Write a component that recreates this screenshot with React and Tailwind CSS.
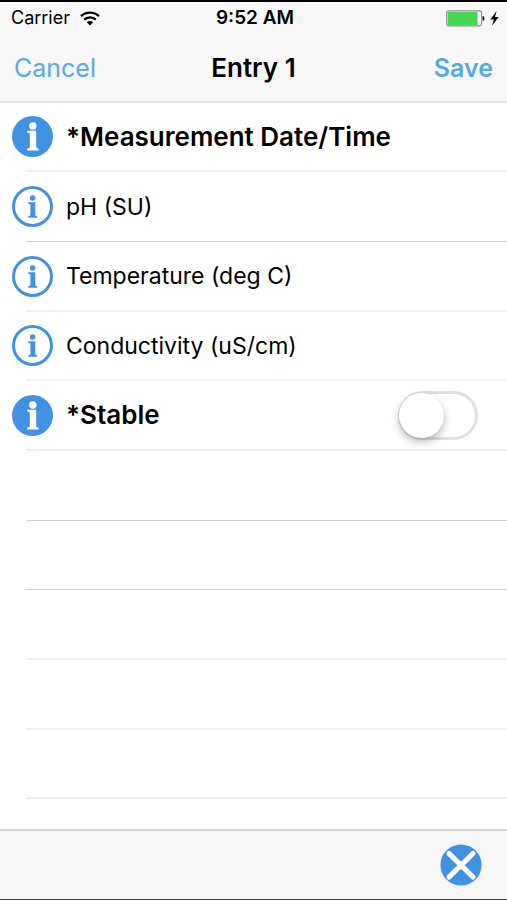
import { useState } from 'react';

// Rows of the entry form, required fields are marked with a star
const fields = [
  { name: '*Measurement Date/Time', required: true },
  { name: 'pH (SU)', strongLine: true },
  { name: 'Temperature (deg C)' },
  { name: 'Conductivity (uS/cm)' },
  { name: '*Stable', required: true, toggle: true },
];

const emptyRows = [
  { strongLine: true },
  { strongLine: true },
  {},
  {},
  {},
];

export default function App() {
  const [stable, setStable] = useState(false);

  return (
    <div className="flex min-h-screen flex-col border-t-2 border-b border-t-black border-b-[#444444] bg-white font-['Inter',sans-serif] text-black">
      <header className="border-b-2 border-[#e4e4e4] bg-[#f7f7f7]">
        <StatusBar />
        <nav className="grid h-[67px] grid-cols-3 items-center px-[14px]">
          <button type="button" className="justify-self-start text-[25px] leading-8 text-[#57a9e6]">Cancel</button>
          <h1 className="justify-self-center text-[26px] leading-8 font-semibold whitespace-nowrap">Entry 1</h1>
          <button type="button" className="justify-self-end text-[25px] leading-8 font-semibold text-[#57a9e6]">Save</button>
        </nav>
      </header>

      <main className="flex-1">
        <ul>
          {fields.map((field) => (
            <Row key={field.name} strongLine={field.strongLine}>
              <button type="button" aria-label={`About ${field.name}`} className="-ml-[14px] shrink-0">
                <InfoIcon filled={field.required} />
              </button>
              {field.toggle ? (
                <>
                  <label htmlFor="stable" className="ml-[13px] flex-1 text-[26px] leading-8 font-semibold">{field.name}</label>
                  <Toggle id="stable" checked={stable} onChange={setStable} />
                </>
              ) : (
                <span className={field.required ? 'ml-[13px] text-[26px] leading-8 font-semibold' : 'ml-[13px] text-[23px] leading-8'}>
                  {field.name}
                </span>
              )}
            </Row>
          ))}
          {emptyRows.map((row, idx) => (
            <Row key={idx} strongLine={row.strongLine} />
          ))}
        </ul>
      </main>

      <footer className="flex h-[70px] items-center justify-end border-t-2 border-[#d6d6d6] bg-[#f7f7f7] px-[25px]">
        <button type="button" aria-label="Close">
          <CloseIcon />
        </button>
      </footer>
    </div>
  );
}

function Row({ strongLine, children }) {
  return (
    <li className="h-[70px] pl-[26px] nth-[3n+1]:h-[69px]">
      <div className={`flex h-full items-center pr-[29px] ${strongLine ? 'border-b border-[#cfcfcf]' : 'border-b-2 border-[#f0f0f0]'}`}>
        {children}
      </div>
    </li>
  );
}

function StatusBar() {
  return (
    <div className="grid h-[32px] grid-cols-3 items-center pr-[8px] pl-[11px] text-[18px] leading-6">
      <div className="flex items-center gap-[10px]">
        <span>Carrier</span>
        <WifiIcon />
      </div>
      <span className="justify-self-center text-[19px] font-semibold whitespace-nowrap">9:52 AM</span>
      <div className="flex items-center gap-[5px] justify-self-end">
        <BatteryIcon />
        <BoltIcon />
      </div>
    </div>
  );
}

function Toggle({ id, checked, onChange }) {
  return (
    <span className="relative h-[49px] w-[80px] shrink-0">
      <input
        id={id}
        type="checkbox"
        role="switch"
        checked={checked}
        onChange={(e) => onChange(e.target.checked)}
        className="peer block h-full w-full appearance-none rounded-full border-[3px] border-[#e0e0e0] bg-white checked:border-[#4cd964] checked:bg-[#4cd964]"
      />
      <span className="pointer-events-none absolute top-[2px] left-[1px] size-[45px] rounded-full bg-white shadow-[0_4px_8px_rgba(0,0,0,0.28)] peer-checked:translate-x-[33px]" />
    </span>
  );
}

// Icons
function InfoIcon({ filled }) {
  if (filled) {
    return (
      <svg width="41" height="41" viewBox="0 0 41 41" fill="none">
        <circle cx="20.5" cy="20.5" r="20.5" fill="#4292e4" />
        <circle cx="20.8" cy="10" r="3.7" fill="white" />
        <path d="M15.2 14.8H24.2V31.8L26.6 32.8V34.6H15.2V32.8L17.8 31.8V17.4L15.2 16.6Z" fill="white" />
      </svg>
    );
  }
  return (
    <svg width="41" height="41" viewBox="0 0 41 41" fill="none">
      <circle cx="20.5" cy="20.5" r="19" stroke="#4292e4" strokeWidth="3" />
      <circle cx="20.6" cy="12" r="2.8" fill="#4292e4" />
      <path d="M16.2 16.2H23.3V29.4L25.2 30.2V31.7H16.2V30.2L18.4 29.4V18.4L16.2 17.7Z" fill="#4292e4" />
    </svg>
  );
}

function CloseIcon() {
  return (
    <svg width="42" height="42" viewBox="0 0 42 42" fill="none">
      <circle cx="21" cy="21" r="20.6" fill="#4292e4" />
      <path d="M9 9.5L33 33M33 9.5L9 33" stroke="white" strokeWidth="5.2" strokeLinecap="round" />
    </svg>
  );
}

function WifiIcon() {
  return (
    <svg width="20" height="15" viewBox="0 0 20 15" fill="none">
      <path d="M1 5.1C6 0.4 14 0.4 19 5.1" stroke="black" strokeWidth="2.2" />
      <path d="M4.2 8.6C7.5 5.5 12.5 5.5 15.8 8.6" stroke="black" strokeWidth="2.2" />
      <path d="M6.8 11.3C8.6 9.7 11.4 9.7 13.2 11.3L10 14.6Z" fill="black" />
    </svg>
  );
}

function BatteryIcon() {
  return (
    <svg width="39" height="17" viewBox="0 0 39 17" fill="none">
      <rect x="0.6" y="0.9" width="35" height="15" rx="2.5" stroke="#8e8e8e" strokeWidth="1.1" />
      <rect x="1.6" y="1.9" width="30" height="13" rx="1" fill="#46d653" />
      <path d="M36.6 6C39 6.4 39 10.4 36.6 10.8Z" fill="black" />
    </svg>
  );
}

function BoltIcon() {
  return (
    <svg width="9" height="15" viewBox="0 0 9 15" fill="none">
      <path d="M6.6 0L0.3 8.4H3.9L2 14.8L8.7 6.1H5Z" fill="black" />
    </svg>
  );
}
